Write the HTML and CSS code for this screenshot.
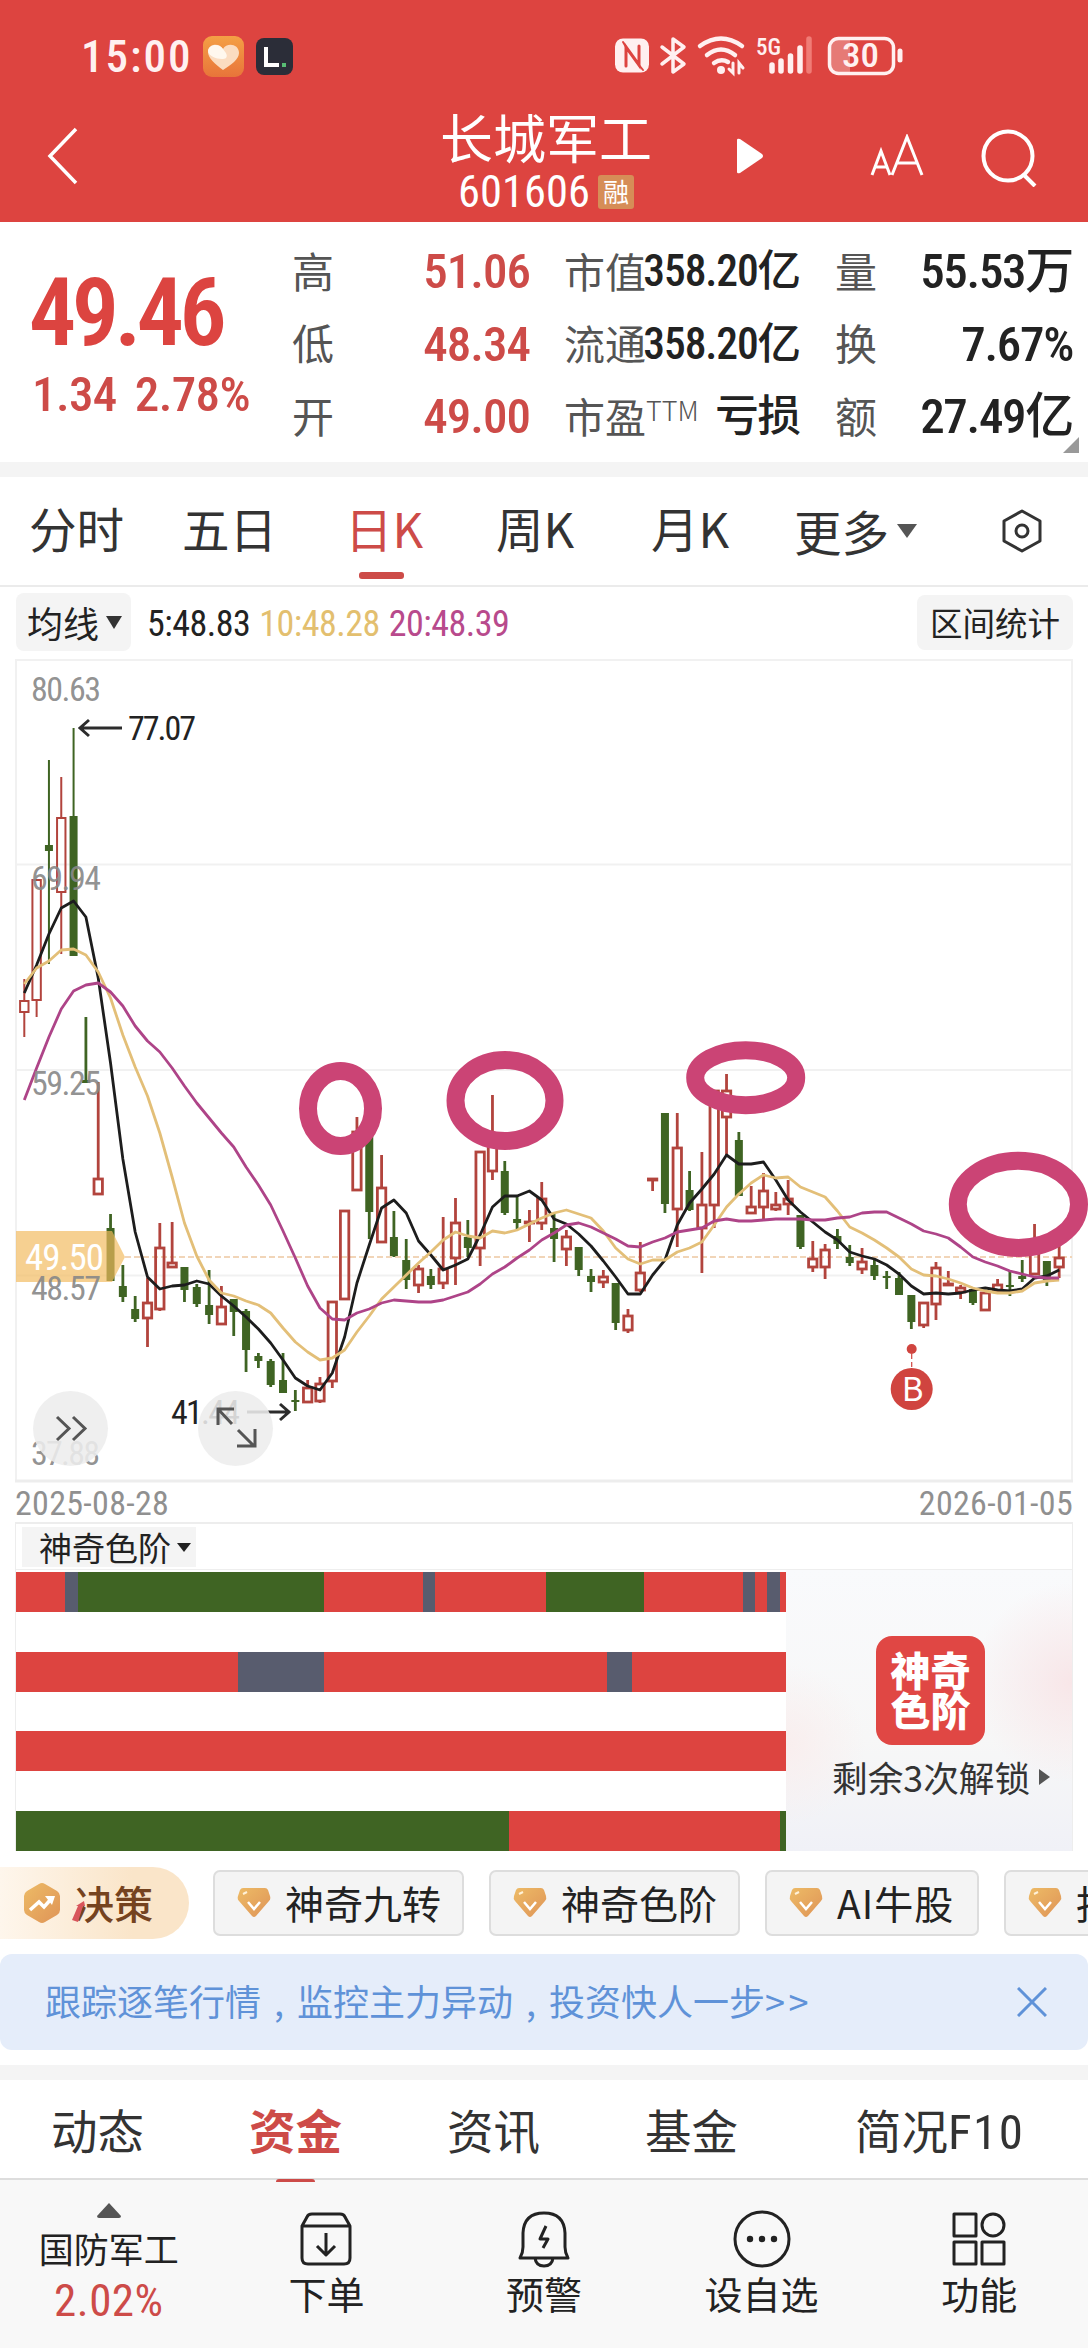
FILE: index.html
```html
<!DOCTYPE html>
<html lang="zh-CN">
<head>
    <meta charset="UTF-8">
    <meta name="viewport" content="width=device-width, initial-scale=1.0">
    <title>长城军工 601606</title>
    <link rel="stylesheet" href="styles.css">
</head>
<body>
    <header class="header">
        <div class="status-bar">
            <span class="clock num">15:00</span>
            <svg class="app-heart" width="41" height="41" viewBox="0 0 41 41">
                <defs>
                    <linearGradient id="heartBg" x1="0" y1="0" x2="0" y2="1"><stop offset="0" stop-color="#f4a045"/><stop offset="1" stop-color="#e8743a"/></linearGradient>
                </defs>
                <rect width="41" height="41" rx="9" fill="url(#heartBg)"/>
                <path d="M20 34C12 28 5 22 5 16C5 8 16 6 20 13C24 6 36 8 36 17C36 23 28 29 20 34Z" fill="#fbdcc0"/>
                <path d="M23 22C19 25 5 21 5 15C6 8 16 7 20 13C23 17 25 19 23 22Z" fill="#fff8ee"/>
            </svg>
            <svg class="app-dark" width="37" height="37" viewBox="0 0 37 37">
                <rect width="37" height="37" rx="8" fill="#2b2d38"/>
                <path d="M10 9V27H23" fill="none" stroke="#fff" stroke-width="4"/>
                <rect x="26" y="25" width="4" height="4" fill="#58bd74"/>
            </svg>
            <svg class="status-icons" width="300" height="56" viewBox="612 28 300 56" fill="none" stroke="#fff0f0" stroke-linecap="round">
                <rect x="615" y="38.500" width="34" height="34" rx="8" fill="#fff0f0" stroke="none"/>
                <path d="M626 66V47L639 65V46" stroke="#dd4440" stroke-width="3"/>
                <path d="M623 42L626 47M639 65L643 70" stroke="#dd4440" stroke-width="2"/>
                <path d="M662 47L684 64L673 72V39L684 47L662 64" stroke-width="3.500" stroke-linejoin="round"/>
                <path d="M700 46Q721 31 742 46M707 55Q721 44 735 55M714 63Q721 58 728 62" stroke-width="4.500"/>
                <circle cx="721" cy="70" r="4" fill="#fff0f0" stroke="none"/>
                <path d="M733 63V73L729 69M739 73V63L743 68" stroke-width="3"/>
                <path d="M772 65V71M781 61V71M790.500 56V71M800 48V71" stroke-width="5.500"/>
                <path d="M809 39V71" stroke-width="5.500" stroke="#f07c76"/>
                <path d="M838 39H850V73H838Q830 73 830 65V47Q830 39 838 39Z" fill="#e67a76" stroke="none"/>
                <rect x="829.500" y="38.500" width="64" height="35" rx="9" stroke-width="3.500"/>
                <path d="M900 51V60" stroke-width="5"/>
                <text class="svg-num" x="756" y="55" font-size="24" textLength="25" lengthAdjust="spacingAndGlyphs">5G</text>
                <text class="svg-num" x="842" y="67" font-size="33" textLength="37" lengthAdjust="spacingAndGlyphs">30</text>
            </svg>
        </div>
        <div class="title-bar">
            <svg class="back" width="34" height="60" viewBox="0 0 34 60"><path d="M30 3L4 30L30 57" fill="none" stroke="#fff" stroke-width="3.500"/></svg>
            <div class="title">
                <h1>长城军工</h1>
                <div class="code"><span class="num">601606</span><span class="badge">融</span></div>
            </div>
            <svg class="play" width="30" height="38" viewBox="0 0 30 38"><path d="M2 3V35Q2 37 5 36L27 21Q29 19 27 17L5 2Q2 1 2 3Z" fill="#fff"/></svg>
            <svg class="font-size" width="54" height="42" viewBox="0 0 54 42" fill="none" stroke="#fff" stroke-width="3"><path d="M2 41L11 17L20 41M5 33H17M22 41L37 3L52 41M27 29H47"/></svg>
            <svg class="search" width="58" height="58" viewBox="0 0 58 58" fill="none" stroke="#fff" stroke-width="4"><circle cx="27" cy="27" r="24.500"/><path d="M43 46L54 57"/></svg>
        </div>
    </header>

    <section class="quote">
        <div class="price">
            <div class="last num">49.46</div>
            <div class="change num"><span>1.34</span><span>2.78%</span></div>
        </div>
        <div class="stats">
            <span class="label">高</span><span class="value up num">51.06</span>
            <span class="label cap">市值</span><span class="value small num">358.20亿</span>
            <span class="label">量</span><span class="value num">55.53万</span>

            <span class="label">低</span><span class="value up num">48.34</span>
            <span class="label cap">流通</span><span class="value small num">358.20亿</span>
            <span class="label">换</span><span class="value num">7.67%</span>

            <span class="label">开</span><span class="value up num">49.00</span>
            <span class="label cap">市盈<i>TTM</i></span><span class="value small num">亏损</span>
            <span class="label">额</span><span class="value num">27.49亿</span>
        </div>
        <svg class="corner" width="16" height="16" viewBox="0 0 16 16"><path d="M16 0V16H0Z" fill="#999"/></svg>
    </section>

    <nav class="period-tabs">
        <span>分时</span>
        <span>五日</span>
        <span class="active">日K</span>
        <span>周K</span>
        <span>月K</span>
        <span class="more">更多<svg width="22" height="14" viewBox="0 0 22 14"><path d="M1 0H21L11 14Z" fill="#555"/></svg></span>
        <svg class="settings" width="40" height="44" viewBox="0 0 40 44" fill="none" stroke="#333" stroke-width="3"><path d="M20 2L38 12V32L20 42L2 32V12Z" stroke-linejoin="round"/><circle cx="20" cy="22" r="6"/></svg>
    </nav>

    <div class="ma-row">
        <span class="ma-button">均线<svg width="16" height="13" viewBox="0 0 16 13"><path d="M0 0H16L8 13Z" fill="#333"/></svg></span>
        <span class="ma5 num">5:48.83</span>
        <span class="ma10 num">10:48.28</span>
        <span class="ma20 num">20:48.39</span>
        <span class="range-button">区间统计</span>
    </div>

    <svg class="chart" width="1088" height="828" viewBox="0 655 1088 828">
        <g fill="none" stroke="#f1f1f1" stroke-width="2">
            <path d="M16 864.500H1072M16 1070H1072M16 1275.500H1072"/>
            <path d="M16 660H1072V1481H16Z"/>
            <path d="M15 1481H1073" stroke="#ededed" stroke-width="3"/>
        </g>
        <path d="M125 1257H1072" stroke="#f1d5b8" stroke-width="2" stroke-dasharray="6 3"/>
        <g id="candles"></g>
        <g id="averages" fill="none" stroke-width="2.800" stroke-linejoin="round"></g>
        <path d="M16 1231H112L125 1257L112 1282H16Z" fill="#f2b95d" fill-opacity=".68"/>
        <g class="svg-num" fill="#888" fill-opacity=".92" font-size="34">
            <text x="31" y="701" textLength="70">80.63</text>
            <text x="31" y="890" textLength="70">69.94</text>
            <text x="31" y="1095" textLength="70">59.25</text>
            <text x="31" y="1300" textLength="70">48.57</text>
            <text x="31" y="1465" textLength="69">37.88</text>
            <text x="25" y="1270" textLength="79" font-size="37" fill="#fff" fill-opacity="1">49.50</text>
            <text x="128" y="740" textLength="68" fill="#222" fill-opacity="1">77.07</text>
            <text x="171" y="1424" textLength="69" fill="#222" fill-opacity="1">41.44</text>
        </g>
        <g fill="none" stroke="#2c2c2c" stroke-width="3">
            <path d="M122 728H80M89 720L80 728L89 736"/>
            <path d="M247 1412H289M280 1404L289 1412L280 1420"/>
        </g>
        <circle cx="70.500" cy="1428.500" r="37.500" fill="#ededed" fill-opacity=".88"/>
        <circle cx="235.500" cy="1428.500" r="37.500" fill="#ededed" fill-opacity=".88"/>
        <g fill="none" stroke="#555" stroke-width="3">
            <path d="M57 1417L69 1428.500L57 1440M73 1417L85 1428.500L73 1440"/>
            <path d="M232 1424L218 1409M234 1409H218V1425M238 1430L253 1445M255 1429V1446H237"/>
        </g>
        <circle cx="911.700" cy="1349" r="5" fill="#d0443f"/>
        <path d="M911.700 1354V1368" stroke="#d0443f" stroke-width="1.200" stroke-dasharray="5 3"/>
        <circle cx="911.700" cy="1389" r="21" fill="#d0443f"/>
        <text class="buy-mark" x="912.500" y="1401" text-anchor="middle">B</text>
        <g fill="none" stroke="#cb4475" stroke-width="18">
            <ellipse cx="340.500" cy="1108.500" rx="32.500" ry="37.500"/>
            <ellipse cx="505" cy="1100.500" rx="49.500" ry="40.500"/>
            <ellipse cx="745.700" cy="1077.700" rx="50.500" ry="27.500"/>
            <ellipse cx="1018.400" cy="1204.300" rx="60.600" ry="43.600"/>
        </g>
    </svg>

    <div class="dates num"><span>2025-08-28</span><span>2026-01-05</span></div>

    <section class="color-levels">
        <div class="levels-head"><span class="levels-button">神奇色阶<svg width="14" height="9" viewBox="0 0 14 9"><path d="M0 0H14L7 9Z" fill="#222"/></svg></span></div>
        <div class="levels-body">
            <div class="levels" id="levels"></div>
            <div class="unlock">
                <div class="unlock-logo">神奇<br>色阶</div>
                <div class="unlock-text">剩余3次解锁<svg width="11" height="16" viewBox="0 0 11 16"><path d="M0 0L11 8L0 16Z" fill="#555"/></svg></div>
            </div>
        </div>
    </section>

    <svg class="defs" width="0" height="0">
        <defs>
            <linearGradient id="gold" x1="0" y1="0" x2="1" y2="1"><stop offset="0" stop-color="#edbb66"/><stop offset="1" stop-color="#df9457"/></linearGradient>
            <symbol id="gem" viewBox="0 0 34 32">
                <path d="M6 1H28Q30 1 31 3L33 9Q34 12 32 14L19 29Q17 31 15 29L2 14Q0 12 1 9L3 3Q4 1 6 1Z" fill="url(#gold)"/>
                <path d="M11 15L17 22L23 15" fill="none" stroke="#fff" stroke-width="2.500"/>
                <path d="M6 7L10 5" stroke="#fff2d8" stroke-width="2"/>
            </symbol>
        </defs>
    </svg>
    <div class="chips">
        <div class="decision">
            <svg width="38" height="42" viewBox="0 0 38 42"><path d="M16 2Q19 0 22 2L34 9Q37 11 37 14V28Q37 31 34 33L22 40Q19 42 16 40L4 33Q1 31 1 28V14Q1 11 4 9Z" fill="url(#gold)"/><path d="M7 28L16 20L21 25L29 16" fill="none" stroke="#fff" stroke-width="3.500"/><path d="M22 14H32L29 23Z" fill="#fff"/></svg>
            <span>决策</span>
            <svg class="spark" width="14" height="22" viewBox="0 0 14 22"><path d="M0 20L6 6L4 6L12 1L13 6L11 6L6 22Z" fill="#d8555b"/></svg>
        </div>
        <div class="chip"><svg width="34" height="32"><use href="#gem"/></svg><span>神奇九转</span></div>
        <div class="chip"><svg width="34" height="32"><use href="#gem"/></svg><span>神奇色阶</span></div>
        <div class="chip ai"><svg width="34" height="32"><use href="#gem"/></svg><span>AI牛股</span></div>
        <div class="chip"><svg width="34" height="32"><use href="#gem"/></svg><span>报告</span></div>
    </div>

    <div class="notice">
        <span>跟踪逐笔行情<b>,</b>监控主力异动<b>,</b>投资快人一步<em>&gt;&gt;</em></span>
        <svg width="30" height="30" viewBox="0 0 30 30"><path d="M1 1L29 29M29 1L1 29" stroke="#5f92d8" stroke-width="3"/></svg>
    </div>

    <nav class="info-tabs">
        <span>动态</span>
        <span class="active">资金</span>
        <span>资讯</span>
        <span>基金</span>
        <span>简况<em class="num">F10</em></span>
    </nav>

    <footer class="toolbar">
        <div class="tool sector">
            <svg width="24" height="15" viewBox="0 0 24 15"><path d="M12 0L24 13Q24 15 22 15H2Q0 15 0 13Z" fill="#555"/></svg>
            <span>国防军工</span>
            <span class="sector-rate num">2.02%</span>
        </div>
        <div class="tool">
            <svg width="58" height="58" viewBox="0 0 58 58"><path d="M5 16V48Q5 54 11 54H47Q53 54 53 48V16M5 16L10 7Q11 4 15 4H43Q47 4 48 7L53 16ZM29 23V45M20 36L29 45L38 36"/></svg>
            <span>下单</span>
        </div>
        <div class="tool">
            <svg width="58" height="58" viewBox="0 0 58 58"><path d="M5 48Q8 43 8 37V23Q9 3 29 3Q49 3 50 23V37Q50 43 53 48ZM20 48Q21 56 29 56Q37 56 38 48M31 16L25 29H33L28 38"/></svg>
            <span>预警</span>
        </div>
        <div class="tool">
            <svg width="58" height="58" viewBox="0 0 58 58"><circle cx="29" cy="29" r="27"/><g fill="#222" stroke="none"><circle cx="17" cy="29" r="3.200"/><circle cx="29" cy="29" r="3.200"/><circle cx="41" cy="29" r="3.200"/></g></svg>
            <span>设自选</span>
        </div>
        <div class="tool">
            <svg width="58" height="58" viewBox="0 0 58 58"><rect x="4" y="4" width="22" height="22"/><circle cx="43" cy="15" r="11"/><rect x="4" y="32" width="22" height="22"/><rect x="32" y="32" width="22" height="22"/></svg>
            <span>功能</span>
        </div>
    </footer>

    <script>
        // [direction, high, body top, body bottom, low]
        const candles = [
            ['r',979,1000,1013,1037],['r',879,879,1001,1017],['g',760,845,851,964],['r',777,817,893,954],['g',728,816,956,956],
            ['g',1017,1080,1083,1083],['r',1082,1178,1195,1195],['g',1214,1228,1281,1281],['g',1265,1286,1297,1302],['g',1296,1309,1319,1322],
            ['r',1278,1302,1319,1347],['r',1223,1247,1310,1311],['r',1222,1262,1268,1268],['g',1267,1267,1290,1302],['g',1284,1287,1304,1307],
            ['g',1270,1305,1315,1324],['r',1286,1306,1325,1325],['g',1299,1299,1312,1336],['g',1309,1311,1350,1372],['g',1353,1356,1361,1368],
            ['g',1359,1361,1385,1387],['g',1353,1380,1393,1393],['g',1390,1400,1402,1411],['r',1380,1387,1403,1403],['r',1377,1383,1402,1403],
            ['r',1301,1301,1382,1388],['r',1210,1210,1300,1300],['r',1117,1131,1191,1191],['g',1130,1130,1212,1239],['r',1155,1187,1243,1243],
            ['g',1211,1237,1256,1257],['g',1239,1260,1280,1289],['r',1265,1268,1286,1293],['g',1269,1276,1285,1289],['r',1217,1268,1284,1289],
            ['r',1198,1222,1259,1285],['g',1220,1237,1248,1257],['r',1151,1151,1249,1266],['r',1095,1140,1172,1180],['g',1161,1171,1213,1215],
            ['g',1196,1219,1223,1229],['r',1210,1221,1224,1242],['r',1182,1198,1224,1230],['g',1213,1228,1239,1262],['r',1230,1236,1250,1266],
            ['g',1247,1247,1270,1276],['g',1269,1276,1282,1292],['r',1270,1276,1283,1288],['g',1283,1283,1323,1330],['r',1309,1315,1331,1333],
            ['r',1242,1272,1291,1292],['r',1178,1178,1181,1191],['g',1113,1113,1204,1213],['r',1113,1147,1210,1247],['g',1171,1190,1210,1211],
            ['r',1152,1204,1229,1273],['r',1090,1090,1206,1228],['r',1074,1090,1118,1155],['g',1132,1140,1196,1196],['r',1186,1206,1214,1214],
            ['r',1173,1190,1208,1220],['r',1192,1204,1210,1211],['r',1180,1198,1205,1215],['g',1215,1215,1247,1249],['r',1241,1258,1268,1272],
            ['r',1244,1249,1268,1279],['g',1229,1236,1244,1249],['g',1245,1257,1263,1266],['r',1248,1261,1270,1274],['g',1259,1265,1276,1280],
            ['g',1271,1276,1278,1289],['g',1272,1278,1295,1295],['g',1295,1295,1322,1329],['r',1302,1302,1326,1328],['r',1262,1267,1305,1320],
            ['r',1271,1283,1285,1286],['r',1285,1287,1293,1299],['g',1289,1289,1303,1305],['r',1292,1292,1311,1311],['r',1279,1284,1292,1292],
            ['g',1270,1285,1287,1296],['g',1260,1276,1279,1282],['r',1224,1246,1275,1275],['g',1261,1261,1280,1286],['r',1243,1257,1268,1278]
        ];
        const averages = {
            '#1d1d1d': [993,965,934,908,901,917,978,1063,1159,1232,1277,1289,1286,1285,1281,1284,1296,1306,1317,1329,1343,1360,1378,1386,1390,1373,1337,1283,1245,1208,1200,1213,1241,1255,1270,1265,1259,1235,1207,1196,1196,1191,1200,1219,1224,1234,1246,1261,1277,1294,1294,1275,1260,1225,1203,1189,1174,1155,1164,1164,1162,1180,1200,1212,1222,1232,1240,1252,1256,1259,1265,1274,1286,1294,1293,1294,1293,1290,1288,1290,1291,1289,1278,1276,1270],
            '#e3bf78': [984,968,961,950,949,955,972,998,1035,1067,1096,1133,1177,1223,1256,1280,1293,1296,1301,1305,1313,1328,1342,1352,1360,1358,1350,1332,1316,1299,1287,1275,1263,1252,1240,1232,1236,1238,1231,1233,1230,1224,1218,1213,1210,1214,1218,1231,1248,1259,1264,1260,1260,1252,1248,1242,1225,1207,1194,1183,1175,1178,1177,1187,1192,1197,1211,1227,1233,1240,1248,1257,1269,1275,1276,1279,1283,1288,1291,1293,1293,1291,1283,1281,1280],
            '#ae4488': [1100,1068,1037,1009,991,985,983,992,1006,1026,1041,1052,1068,1086,1103,1118,1133,1147,1167,1185,1205,1231,1258,1286,1308,1319,1320,1313,1309,1303,1300,1301,1302,1302,1300,1296,1292,1284,1274,1267,1258,1250,1240,1233,1225,1223,1227,1233,1239,1246,1247,1242,1238,1232,1230,1228,1221,1219,1221,1221,1220,1219,1219,1219,1220,1220,1218,1217,1213,1212,1212,1218,1224,1231,1234,1238,1247,1257,1262,1266,1271,1274,1277,1278,1278]
        };
        const x = i => 24.3 + 12.32 * i;

        document.getElementById('candles').innerHTML = candles.map(([dir, high, top, bottom, low], i) => {
            const w = i < 5 ? 2 : 2.8;
            if (dir === 'g') {
                return `<path d="M${x(i)} ${high}V${low}" stroke="#3f6423" stroke-width="${w}"/>` +
                    `<rect x="${x(i) - 4}" y="${top}" width="8" height="${bottom - top}" fill="#3f6423"/>`;
            }
            // hollow body, the wick stops at its edges
            return `<path d="M${x(i)} ${high}V${top}M${x(i)} ${bottom}V${low}" stroke="#b2443d" stroke-width="${w}"/>` +
                `<rect x="${x(i) - 4.2}" y="${top + 1}" width="8.4" height="${Math.max(bottom - top - 2, 1)}" fill="none" stroke="#b2443d" stroke-width="${w}"/>`;
        }).join('');

        document.getElementById('averages').innerHTML = Object.entries(averages).map(([color, ys]) =>
            `<polyline stroke="${color}" points="${ys.map((y, i) => `${x(i)},${y}`).join(' ')}"/>`
        ).join('');

        // each level is a row of runs: [state, number of days]
        const levels = [
            [['red',4],['slate',1],['green',20],['red',8],['slate',1],['red',9],['green',8],['red',8],['slate',1],['red',1],['slate',1],['red',.5]],
            [['red',18],['slate',7],['red',23],['slate',2],['red',12.5]],
            [['red',62.5]],
            [['green',40],['red',22],['green',.5]]
        ];
        document.getElementById('levels').innerHTML = levels.map(row =>
            '<div class="level">' + row.map(([state, days]) => `<i class="${state}" style="width: ${days / 62.5 * 100}%"></i>`).join('') + '</div>'
        ).join('');
    </script>
</body>
</html>
```
FILE: styles.css
```css
* {
    box-sizing: border-box;
}
body {
    margin: 0;
    width: 1088px;
    height: 2348px;
    overflow: hidden;
    background: #fff;
    color: #222;
    font-family: "Noto Sans CJK SC", sans-serif;
}
svg {
    display: block;
    flex-shrink: 0;
}
em {
    font-style: normal;
}
.num {
    font-family: Roboto, "Noto Sans CJK SC", sans-serif;
    font-stretch: 75%;
}
.svg-num {
    font-family: Roboto, sans-serif;
    font-stretch: 75%;
}
text.svg-num {
    fill: #fff0f0;
    stroke: none;
    font-weight: 500;
}

/* header */
.header {
    height: 222px;
    background: #dd4440;
    color: #fff;
}
.status-bar {
    display: flex;
    align-items: center;
    height: 112px;
    padding: 0 176px 0 81px;
}
.clock {
    width: 122px;
    font-size: 45px;
    font-weight: 500;
    letter-spacing: 2px;
    color: #fff0f0;
}
.app-dark {
    margin-left: 12px;
}
.status-icons {
    margin-left: auto;
}
.title-bar {
    display: grid;
    grid-template-columns: 392px 308px 134px 111px 143px;
    height: 110px;
}
.back {
    margin: 14px 0 0 46px;
}
.title {
    text-align: center;
}
.title h1 {
    margin: -5px 0 0;
    font-size: 53px;
    font-weight: 400;
    line-height: 58px;
}
.code {
    display: flex;
    align-items: center;
    justify-content: center;
    gap: 8px;
    margin-top: 5px;
    height: 44px;
    font-size: 44.5px;
}
.badge {
    width: 36px;
    height: 34px;
    border-radius: 3px;
    background: #d68d57;
    font-size: 26px;
    line-height: 32px;
}
.play {
    margin: 25px 0 0 35px;
}
.font-size {
    margin: 22px 0 0 36px;
}
.search {
    margin: 17px 0 0 36px;
}

/* quote */
.quote {
    position: relative;
    display: flex;
    height: 240px;
}
.price {
    width: 292px;
    padding: 35px 0 0 29px;
    color: #dc4440;
}
.last {
    font-size: 94px;
    font-weight: 600;
    line-height: 112px;
    letter-spacing: -4.5px;
}
.change {
    display: flex;
    gap: 18px;
    margin-top: -3px;
    padding-left: 3px;
    font-size: 49px;
    font-weight: 500;
    line-height: 58px;
    letter-spacing: -0.6px;
    color: #cd4b48;
}
.stats {
    display: grid;
    grid-template-columns: 60px 178px 109px 161px 78px 195px;
    grid-auto-rows: 72.5px;
    align-items: center;
    padding-top: 14px;
    line-height: 72px;
}
.label {
    margin-top: -5px;
    font-size: 42px;
    color: #555;
    white-space: nowrap;
}
.label.cap {
    padding-left: 34px;
    font-size: 41px;
}
.label i {
    font-size: 27px;
    font-style: normal;
    font-weight: 300;
    line-height: 1;
    vertical-align: 12px;
}
.stats .label:nth-child(6n + 5) {
    padding-left: 35px;
}
.value {
    font-size: 49px;
    font-weight: 500;
    letter-spacing: -1.3px;
    text-align: right;
    white-space: nowrap;
}
.value.small {
    font-size: 43.5px;
    letter-spacing: -1.1px;
}
.value.up {
    letter-spacing: -1px;
    color: #cd4b48;
}
.corner {
    position: absolute;
    right: 9px;
    bottom: 9px;
}

/* period tabs */
.period-tabs {
    display: grid;
    grid-template-columns: 153px 163px 151px 155px 143px 208px auto;
    align-items: center;
    height: 125px;
    padding: 0 0 2px 29px;
    border-top: 15px solid #f4f4f4;
    border-bottom: 2px solid #ebebeb;
    font-size: 47.5px;
    line-height: 102px;
    color: #333;
}
.period-tabs span {
    height: 108px;
}
.period-tabs .active {
    position: relative;
    color: #cd4b48;
}
.period-tabs .active::after {
    content: "";
    position: absolute;
    left: 14px;
    bottom: 6px;
    width: 45px;
    height: 7px;
    border-radius: 3px;
    background: #cd4b48;
}
.more {
    display: flex;
    align-items: center;
    gap: 7px;
}

/* moving averages */
.ma-row {
    display: flex;
    align-items: center;
    height: 68px;
    padding: 2px 15px 0 16px;
    font-size: 36px;
    letter-spacing: -0.5px;
}
.ma-button {
    display: flex;
    align-items: center;
    gap: 7px;
    width: 115px;
    height: 58px;
    margin-right: 16px;
    padding-left: 11px;
    border-radius: 8px;
    background: #f4f4f4;
    letter-spacing: 0;
}
.ma-row .num {
    padding-top: 3px;
}
.ma10 {
    margin: 0 9px;
    color: #e3bf6f;
}
.ma20 {
    color: #b84a8c;
}
.range-button {
    margin-left: auto;
    width: 156px;
    height: 55px;
    border-radius: 8px;
    background: #f4f4f4;
    font-size: 32.5px;
    line-height: 53px;
    letter-spacing: 0;
    text-align: center;
}
.buy-mark {
    fill: #fff;
    font-family: "Noto Sans CJK SC", sans-serif;
    font-size: 33px;
}
.dates {
    display: flex;
    justify-content: space-between;
    height: 39px;
    padding: 0 15px;
    font-size: 34px;
    line-height: 41px;
    letter-spacing: 0.3px;
    color: #909090;
}

/* colour levels */
.color-levels {
    width: 1058px;
    margin-left: 15px;
    border: solid #ededed;
    border-width: 2px 1px 0;
}
.levels-head {
    height: 46px;
    padding: 3px 0 0 6px;
    border-bottom: 1px solid #eee;
}
.levels-button {
    display: flex;
    align-items: center;
    gap: 6px;
    width: 174px;
    height: 40px;
    padding-left: 17px;
    background: #f4f4f4;
    font-size: 33px;
    line-height: 36px;
}
.levels-body {
    display: flex;
    height: 281px;
}
.levels {
    display: grid;
    grid-template-rows: repeat(4, 40px);
    align-content: space-between;
    width: 770px;
    padding: 2px 0 0;
}
.level {
    display: flex;
}
.red {
    background: #dd4440;
}
.green {
    background: #3f6423;
}
.slate {
    background: #585c6e;
}
.unlock {
    flex: 1;
    padding-top: 66px;
    background: radial-gradient(circle at 100% 40%, #f8e6e8 0, rgba(248, 230, 232, 0) 100px), radial-gradient(circle at 0 62%, #f9eeee 0, rgba(249, 238, 238, 0) 80px), linear-gradient(#f9fafc, #f7f7f7 60%, #f0f1f7);
}
.unlock-logo {
    width: 109px;
    height: 109px;
    margin-left: 90px;
    padding-top: 13px;
    border-radius: 16px;
    background: #e04744;
    color: #fff;
    font-size: 40px;
    font-weight: 900;
    line-height: 40px;
    text-align: center;
}
.unlock-text {
    display: flex;
    align-items: center;
    gap: 9px;
    margin: 7px 0 0 46px;
    font-size: 35.7px;
    line-height: 50px;
    color: #333;
    white-space: nowrap;
}

/* chips */
.defs {
    position: absolute;
}
.chips {
    display: flex;
    align-items: center;
    gap: 25px;
    height: 72px;
    margin-top: 16px;
    overflow: hidden;
}
.chips span {
    margin-top: -3px;
}
.decision {
    position: relative;
    display: flex;
    flex-shrink: 0;
    align-items: center;
    gap: 14px;
    width: 189px;
    height: 72px;
    margin-right: -1px;
    padding-left: 23px;
    border-radius: 0 36px 36px 0;
    background: linear-gradient(90deg, #fef6ec, #fae5c9 70%);
    font-size: 39px;
    font-weight: 500;
    color: #75431f;
}
.spark {
    position: absolute;
    left: 72px;
    top: 33px;
}
.chip {
    display: flex;
    flex-shrink: 0;
    align-items: center;
    gap: 14px;
    width: 251px;
    height: 66px;
    padding-left: 22px;
    border: 2px solid #ddd;
    border-radius: 7px;
    background: #f4f4f4;
    font-size: 39px;
    white-space: nowrap;
}
.chip.ai {
    width: 214px;
    letter-spacing: 1px;
}

/* notice */
.notice {
    display: flex;
    align-items: center;
    justify-content: space-between;
    height: 96px;
    margin-top: 15px;
    padding: 0 41px 0 45px;
    border-radius: 12px;
    background: #e5edfa;
    color: #5f92d8;
    font-size: 36px;
}
.notice span {
    margin-top: -4px;
}
.notice b {
    display: inline-block;
    width: 36px;
    padding-left: 13px;
    font-weight: 400;
}
.notice em {
    letter-spacing: 3.5px;
}

/* info tabs */
.info-tabs {
    display: grid;
    grid-template-columns: 198px 198px 198px 210px auto;
    height: 115px;
    margin-top: 15px;
    padding-left: 51px;
    border-top: 15px solid #f4f4f4;
    border-bottom: 2px solid #ddd;
    font-size: 46.5px;
    line-height: 98px;
    color: #333;
}
.info-tabs .active {
    position: relative;
    color: #cd4b48;
    font-weight: 700;
}
.info-tabs .active::after {
    content: "";
    position: absolute;
    left: 27px;
    bottom: 0;
    width: 39px;
    height: 3px;
    border-radius: 3px 3px 0 0;
    background: #cd4b48;
}
.info-tabs em {
    font-size: 49px;
    letter-spacing: 1.5px;
}

/* bottom toolbar */
.toolbar {
    display: grid;
    grid-template-columns: repeat(5, 1fr);
    height: 168px;
    background: #f8f8f8;
}
.tool {
    display: flex;
    flex-direction: column;
    align-items: center;
    padding-top: 30px;
    font-size: 38px;
    line-height: 49px;
}
.tool svg {
    fill: none;
    stroke: #222;
    stroke-width: 3;
    stroke-linejoin: round;
}
.sector {
    padding-top: 23px;
    font-size: 35px;
    line-height: 60px;
}
.sector svg {
    stroke: none;
}
.sector-rate {
    margin-top: -7px;
    font-size: 45px;
    letter-spacing: 0.5px;
    color: #cd4b48;
}
```
